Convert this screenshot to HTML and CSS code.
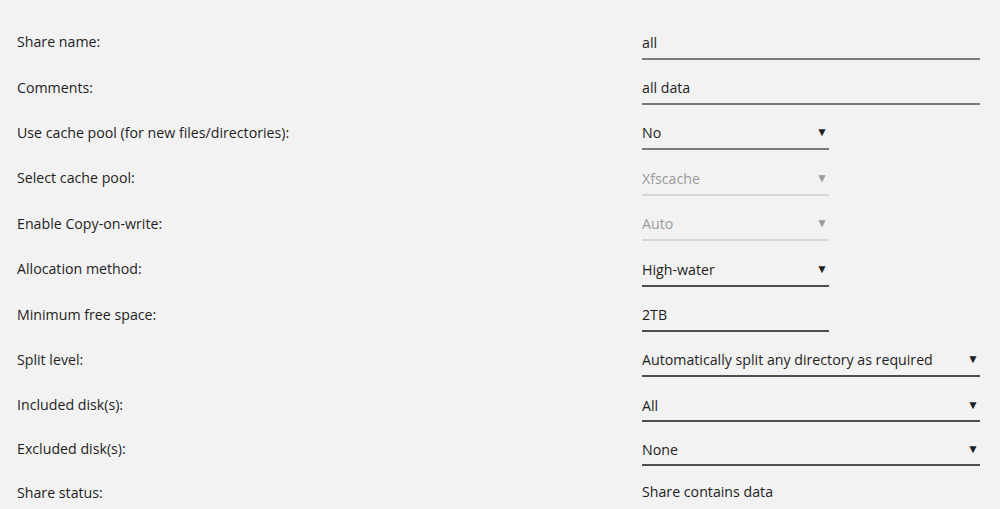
FILE: index.html
```html
<!DOCTYPE html>
<html lang="en">
<head>
    <meta charset="UTF-8">
    <meta name="viewport" content="width=device-width, initial-scale=1.0">
    <title>Share Settings</title>
    <link rel="stylesheet" href="styles.css">
</head>
<body>
    <form class="share-form">
        <div class="row">
            <div class="label">Share name:</div>
            <div class="field wide light">all</div>
        </div>
        <div class="row">
            <div class="label">Comments:</div>
            <div class="field wide light">all data</div>
        </div>
        <div class="row">
            <div class="label">Use cache pool (for new files/directories):</div>
            <div class="field select narrow light">No</div>
        </div>
        <div class="row">
            <div class="label">Select cache pool:</div>
            <div class="field select narrow disabled">Xfscache</div>
        </div>
        <div class="row">
            <div class="label">Enable Copy-on-write:</div>
            <div class="field select narrow disabled">Auto</div>
        </div>
        <div class="row">
            <div class="label">Allocation method:</div>
            <div class="field select narrow">High-water</div>
        </div>
        <div class="row">
            <div class="label">Minimum free space:</div>
            <div class="field narrow">2TB</div>
        </div>
        <div class="row">
            <div class="label">Split level:</div>
            <div class="field select wide">Automatically split any directory as required</div>
        </div>
        <div class="row short">
            <div class="label">Included disk(s):</div>
            <div class="field select wide low">All</div>
        </div>
        <div class="row short">
            <div class="label">Excluded disk(s):</div>
            <div class="field select wide low">None</div>
        </div>
        <div class="row short">
            <div class="label">Share status:</div>
            <div class="value">Share contains data</div>
        </div>
    </form>
</body>
</html>
```

FILE: styles.css
```css
body {
    font-family: 'Open Sans', sans-serif;
    font-size: 14.2px;
    background-color: #f2f2f2;
    color: #1e1e1e;
    margin: 0;
    padding: 21px 0 0 17px;
}

.row {
    display: grid;
    grid-template-columns: 625px 1fr;
    align-items: center;
    height: 45.4px;
}

.row.short {
    height: 44px;
}

.label {
    padding-bottom: 4px;
}

.field {
    line-height: 30px;
    border-bottom: 2px solid #4e4e4e;
    position: relative;
}

.field.light {
    border-bottom-color: #7a7a7a;
}

/* disk pickers sit their text a bit closer to the line */
.field.low {
    padding-top: 2px;
    line-height: 28px;
}

.field.wide {
    width: 338px;
}

.field.narrow {
    width: 187px;
}

/* little dropdown caret on the right of each select */
.field.select::after {
    content: "▼";
    position: absolute;
    right: 1px;
    top: -1px;
    font-size: 12px;
    color: #1e1e1e;
}

.field.low::after {
    top: 1px;
}

.field.disabled {
    color: #9a9a9a;
    border-bottom-color: #d6d6d6;
}

.field.disabled::after {
    color: #9a9a9a;
}

.value {
    line-height: 30px;
    padding-bottom: 4px;
}
```
